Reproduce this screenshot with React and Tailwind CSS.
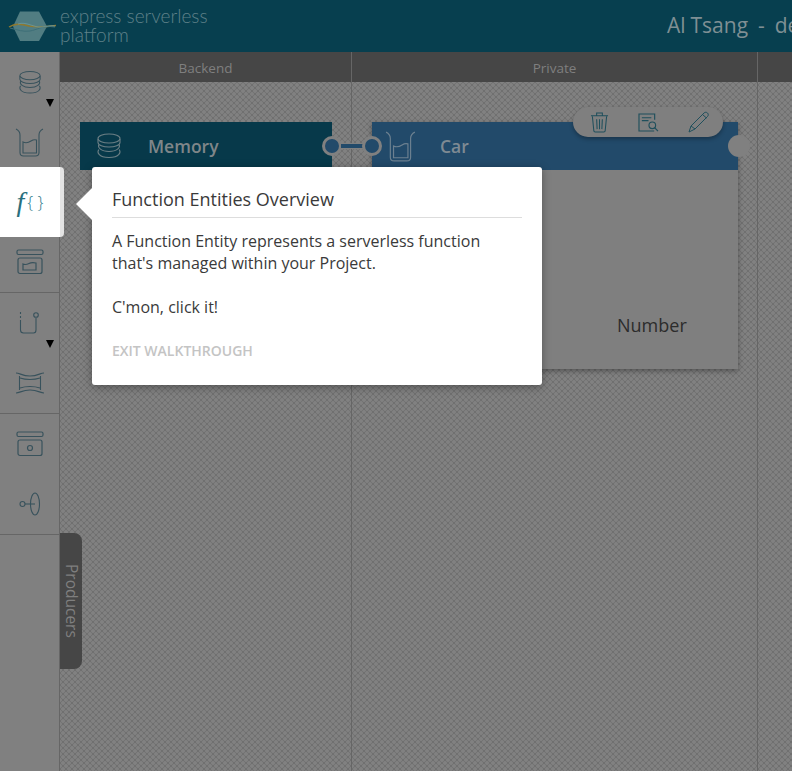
import React from 'react';

const DbIcon = ({ className }) => (
  <svg viewBox="0 0 26 26" fill="none" stroke="currentColor" strokeWidth="1.100" className={className}>
    <ellipse cx="13" cy="5.5" rx="11" ry="4.5" />
    <path d="M2 6v3.5C2 12 7 14 13 14s11-2 11-4.5V6" />
    <path d="M2.8 11.5C1.5 14.500 5 18.500 13 18.500s11.500-4 10.200-7" />
    <path d="M2.800 16.500C1 19 2 24.500 13 24.500s12-5.500 10.200-8" />
  </svg>
);

const BeakerIcon = ({ className }) => (
  <svg viewBox="0 0 30 30" fill="none" stroke="currentColor" strokeWidth="1.100" className={className}>
    <path d="M1 2c2 1 4 2.500 4 6v17.500C5 27.500 6.500 29 8.500 29h12c2 0 3.500-1.500 3.500-3.500V8c0-3.500 2-5 4-6" />
    <path d="M8 26V15c3 1.500 5 1 8-1 2-1.300 4-1.500 5.500-1v13z" />
  </svg>
);

const ArchiveIcon = ({ children }) => (
  <svg viewBox="0 0 28 26" fill="none" stroke="currentColor" strokeWidth="1.200" className="w-[28px] h-[26px]">
    <rect x="1" y="1" width="26" height="4.500" rx="1.500" />
    <rect x="2" y="9" width="24" height="15.500" rx="2" />
    {children}
  </svg>
);

const HookIcon = () => (
  <svg viewBox="0 0 22 24" fill="none" stroke="currentColor" strokeWidth="1.100" className="w-[22px] h-[24px]">
    <path d="M1.500 1v2M1.500 5v2M1.500 9v10c0 2 1 3 3 3h10c1.500 0 2.500-1 2.500-3V7" />
    <circle cx="17" cy="4" r="2.300" />
  </svg>
);

const BridgeIcon = () => (
  <svg viewBox="0 0 28 22" fill="none" stroke="currentColor" strokeWidth="1.100" className="w-[28px] h-[22px]">
    <path d="M0 1c4 0 6 3 14 3s10-3 14-3" />
    <path d="M0 21c4 0 6-3 14-3s10 3 14 3" />
    <path d="M3.500 4v14M24.500 4v14" />
    <path d="M4 6c3 1 5 1.500 10 1.500S21 7 24 6M4 16c3-1 5-1.500 10-1.500S21 15 24 16" />
  </svg>
);

const ProbeIcon = () => (
  <svg viewBox="0 0 22 24" fill="none" stroke="currentColor" strokeWidth="1.100" className="w-[22px] h-[24px]">
    <circle cx="3.500" cy="12" r="2.500" />
    <path d="M6 12h10" />
    <ellipse cx="16" cy="12" rx="4.500" ry="11" />
  </svg>
);

const Caret = () => (
  <span className="absolute left-[46px] top-[47px] w-0 h-0 border-x-[4.500px] border-x-transparent border-t-[8px] border-t-black" />
);

const Logo = () => (
  <svg viewBox="0 0 50 34" fill="none" className="w-[50px] h-[34px] shrink-0">
    <path d="M12 2.500h19l8 15-8 14.500H12L5 17.500z" fill="#517d82" />
    <path d="M1 18c6-4 12-3 20-1 8 1.500 16 1 27-.5" stroke="#90792d" strokeWidth="1.300" />
    <path d="M2 19c8 2 13 4 20 3s12-6 25-4" stroke="#3d6f78" strokeWidth="1" />
    <path d="M10 15c8-3 16 4 24 3 5-.5 9-2 13-1" stroke="#6b9aa0" strokeWidth="0.800" />
  </svg>
);

const SideRow = ({ children, caret }) => (
  <div className="relative h-[60px] flex items-center justify-center text-[#38525c]">
    {children}
    {caret && <Caret />}
  </div>
);

const pattern =
  'bg-[#707070] bg-[radial-gradient(circle,rgba(255,255,255,0.12)_1.500px,transparent_2.200px),radial-gradient(circle,rgba(255,255,255,0.12)_1.500px,transparent_2.200px)] bg-[length:6px_6px] bg-[position:0_0,3px_3px]';

export default function App() {
  return (
    <div className="relative h-[771px] w-[792px] overflow-hidden flex flex-col font-['Open_Sans',sans-serif]">
      {/* Top bar */}
      <header className="h-[52px] shrink-0 bg-[#073f4f] flex items-center pl-[8px]">
        <Logo />
        <div className="ml-[2px] -mt-[2px] w-[170px] shrink-0 whitespace-nowrap text-[19px] leading-[19px] font-light text-[#5f8189] font-['Lato',sans-serif]">
          express serverless
          <br />
          platform
        </div>
        <div className="ml-[437px] shrink-0 whitespace-pre text-[21px] [word-spacing:-0.5px] text-[#7f8f94]">Al Tsang  -  de</div>
      </header>

      <div className="flex flex-1 min-h-0">
        {/* Left rail */}
        <aside className="w-[60px] shrink-0 bg-[#808080] border-r border-[#666666]">
          <div className="border-b border-[#666666]">
            <SideRow caret><DbIcon className="w-[24px] h-[25px]" /></SideRow>
            <SideRow><BeakerIcon className="w-[30px] h-[30px]" /></SideRow>
            <SideRow />
            <SideRow>
              <ArchiveIcon>
                <path d="M7 21v-6c2 1 4 .5 6-.5 2-1 4-1 7-.5v7z" />
              </ArchiveIcon>
            </SideRow>
          </div>
          <div className="border-b border-[#666666]">
            <SideRow caret><HookIcon /></SideRow>
            <SideRow><BridgeIcon /></SideRow>
          </div>
          <div className="border-b border-[#666666]">
            <SideRow>
              <ArchiveIcon>
                <circle cx="14" cy="17" r="2.500" />
              </ArchiveIcon>
            </SideRow>
            <SideRow><ProbeIcon /></SideRow>
          </div>
        </aside>

        {/* Swimlanes */}
        <main className="flex flex-1 min-w-0">
          <section className="w-[292px] shrink-0 flex flex-col border-r border-[#666666]">
            <div className="h-[30px] shrink-0 bg-[#464646] flex items-center justify-center pt-[2px] text-[13.500px] text-[#7f7f7f]">
              Backend
            </div>
            <div className={`flex-1 pt-[40px] pl-[20px] ${pattern}`}>
              <div className="w-[252px] h-[48px] bg-[#07394a] flex items-center pl-[16px] gap-[26px] text-[#6c7f85]">
                <DbIcon className="w-[26px] h-[30px]" />
                <span className="text-[17.500px] font-semibold text-[#7f8689]">Memory</span>
              </div>
            </div>
          </section>

          <section className="w-[406px] shrink-0 flex flex-col border-r border-[#666666]">
            <div className="h-[30px] shrink-0 bg-[#464646] flex items-center justify-center pt-[2px] text-[13.500px] text-[#7f7f7f]">
              Private
            </div>
            <div className={`flex-1 pt-[40px] pl-[20px] ${pattern}`}>
              <div className="relative w-[366px] shadow-[0_2px_5px_rgba(0,0,0,0.35)]">
                <div className="h-[48px] bg-[#224a6a] flex items-center pl-[13px] gap-[23px] text-[#6c8090]">
                  <BeakerIcon className="w-[32px] h-[32px]" />
                  <span className="text-[17.500px] font-semibold text-[#7f8a93]">Car</span>
                </div>
                <div className="h-[199px] bg-[#7f7f7f] pl-[245px] pt-[142px] text-[18px] text-[#2c2c2c]">
                  Number
                </div>

                {/* Hover actions on the entity */}
                <div className="absolute left-[201px] -top-[15px] w-[150px] h-[30px] rounded-full bg-[#7f7f7f] shadow-[0_2px_4px_rgba(0,0,0,0.3)] flex items-center justify-between pl-[17px] pr-[13px] text-[#1f4f5c]">
                  <svg viewBox="0 0 20 22" fill="none" stroke="currentColor" strokeWidth="1.100" className="w-[19px] h-[22px]">
                    <path d="M1 4.500h18M7 4V1.500h6V4" />
                    <path d="M2.500 5l1.500 15c0 .8.600 1.500 1.500 1.500h9c.9 0 1.500-.7 1.500-1.500l1.500-15" />
                    <path d="M7 8l.5 10.500M10 8v10.500M13 8l-.5 10.500" />
                  </svg>
                  <svg viewBox="0 0 22 20" fill="none" stroke="currentColor" strokeWidth="1.200" className="w-[21px] h-[19px]">
                    <path d="M17.500 7V1H1v18h16" />
                    <path d="M4 5h10M4 8h7" />
                    <circle cx="15" cy="13" r="3.500" />
                    <path d="M17.500 15.500L21 19" />
                  </svg>
                  <svg viewBox="0 0 22 22" fill="none" stroke="currentColor" strokeWidth="1" className="w-[22px] h-[22px]">
                    <path d="M1 21l2-6L16 2c1-1 2.500-1 3.500 0s1 2.500 0 3.500L7 18z" />
                    <path d="M3 15l4 3M14.500 3.500l4 3.500" />
                  </svg>
                </div>

                {/* Ports */}
                <div className="absolute -left-[50px] top-[14px] w-[60px] flex items-center">
                  <span className="w-[20px] h-[20px] rounded-full bg-[#224a6a] border-[3px] border-[#808080]" />
                  <span className="flex-1 h-[6px] -mx-[1px] bg-[#224a6a] border-y border-[#808080]" />
                  <span className="w-[20px] h-[20px] rounded-full bg-[#224a6a] border-[3px] border-[#808080]" />
                </div>
                <span className="absolute left-[356px] top-[13px] w-[22px] h-[22px] rounded-full bg-[#808080]" />
              </div>
            </div>
          </section>

          <section className="flex-1 flex flex-col">
            <div className="h-[30px] shrink-0 bg-[#464646]" />
            <div className={`flex-1 ${pattern}`} />
          </section>
        </main>
      </div>

      {/* Producers drawer tab */}
      <div className="absolute left-[60px] top-[533px] w-[22px] h-[136px] bg-[#464646] rounded-r-lg flex items-center pt-[31px] text-[15.500px] text-[#7f7f7f] [writing-mode:vertical-rl]">
        Producers
      </div>

      {/* Highlighted function tile */}
      <div className="absolute left-0 top-[167px] w-[64px] h-[70px] rounded-r-sm bg-[#e4e4e4] overflow-hidden">
        <div className="w-[60px] h-full bg-white flex items-center justify-center text-[#2a6f7e]">
          <span className="font-['Liberation_Serif',serif] italic text-[28px] leading-none">f</span>
          <span className="ml-[3px] text-[17px] font-light whitespace-pre text-[#2f7d8c]">{'{ }'}</span>
        </div>
      </div>

      {/* Walkthrough popover */}
      <div className="absolute left-[92px] top-[167px] w-[450px] h-[218px] bg-white rounded-[3px] shadow-[0_2px_8px_rgba(0,0,0,0.35)] px-[20px] pt-[20px] text-[#3a3a3a]">
        <span className="absolute -left-[16px] top-[21px] w-0 h-0 border-y-[16px] border-y-transparent border-r-[16px] border-r-white" />
        <h2 className="text-[18px] leading-[24px] pb-[6px] border-b border-[#dddddd]">Function Entities Overview</h2>
        <p className="mt-[12px] text-[16px] leading-[22px]">
          A Function Entity represents a serverless function
          <br />
          that's managed within your Project.
        </p>
        <p className="mt-[22px] text-[16px] leading-[22px]">C'mon, click it!</p>
        <button className="block mt-[22px] text-[14px] leading-[22px] font-semibold text-[#c4c4c4]">EXIT WALKTHROUGH</button>
      </div>
    </div>
  );
}
